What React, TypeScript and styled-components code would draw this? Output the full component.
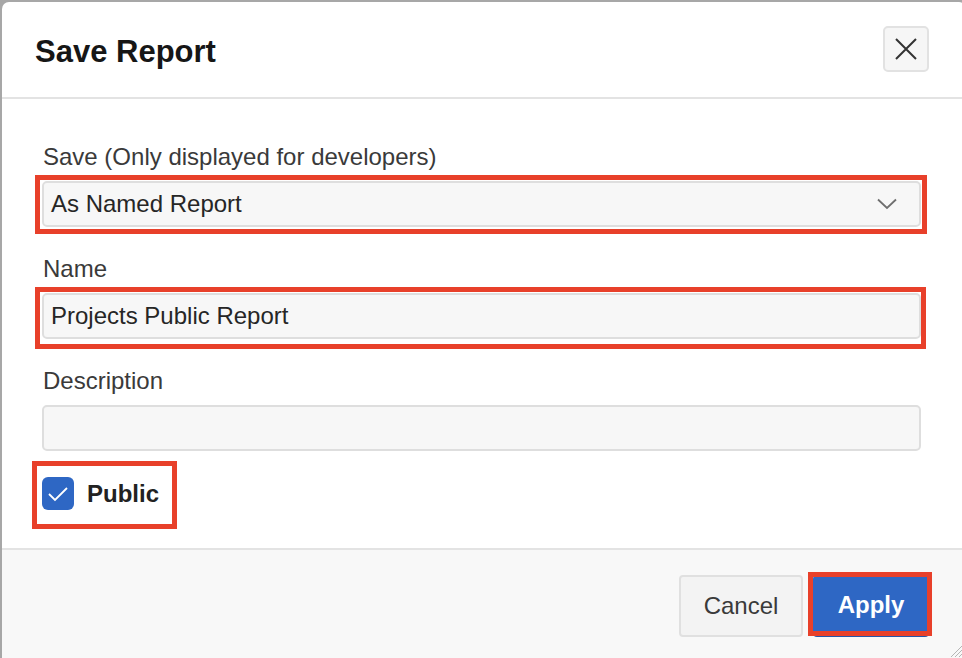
import React from 'react';
import styled, { createGlobalStyle } from 'styled-components';

const GlobalStyles = createGlobalStyle`
  html, body {
    margin: 0;
    padding: 0;
    height: 100%;
    background: #a7a7a7;
    overflow: hidden;
  }
  #root {
    height: 100%;
  }
  * {
    box-sizing: border-box;
  }
`;

const Dialog = styled.div`
  margin: 2px 0 0 2px;
  width: 964px;
  height: calc(100vh - 2px);
  background: #ffffff;
  border-top-left-radius: 7px;
  border-top-right-radius: 7px;
  display: flex;
  flex-direction: column;
  overflow: hidden;
  font-family: 'Liberation Sans', Arial, sans-serif;
  color: #262626;
  position: relative;
`;

const Header = styled.div`
  height: 97px;
  flex-shrink: 0;
  display: flex;
  align-items: center;
  justify-content: space-between;
  padding: 0 37px 0 33px;
  border-bottom: 2px solid #e3e3e3;
`;

const Title = styled.h1`
  margin: 0;
  font-size: 31px;
  font-weight: 700;
  color: #161616;
  padding-top: 5px;
`;

const CloseButton = styled.button`
  width: 46px;
  height: 46px;
  margin-top: -1px;
  border: 2px solid #e2e2e2;
  border-radius: 5px;
  background: #f6f6f6;
  display: flex;
  align-items: center;
  justify-content: center;
  padding: 0;
  color: #333333;
`;

const Body = styled.div`
  padding: 42px 45px 38px 38px;
  display: flex;
  flex-direction: column;
  gap: 26px;
`;

const Field = styled.div`
  display: flex;
  flex-direction: column;
  gap: 8px;
`;

const Label = styled.label`
  font-size: 24px;
  line-height: 32px;
  color: #3a3a3a;
  padding-left: 3px;
`;

const Control = styled.div`
  position: relative;
  margin-left: 2px;
`;

const Input = styled.div`
  height: 46px;
  border: 2px solid #dedede;
  border-radius: 5px;
  background: #f7f7f7;
  display: flex;
  align-items: center;
  justify-content: space-between;
  padding: 0 22px 0 7px;
  font-size: 24px;
  color: #262626;
`;

const Highlight = styled.div<{ $t: number; $r: number; $b: number; $l: number }>`
  position: absolute;
  top: ${(p) => -p.$t}px;
  right: ${(p) => -p.$r}px;
  bottom: ${(p) => -p.$b}px;
  left: ${(p) => -p.$l}px;
  border: 5px solid #e8402a;
  pointer-events: none;
`;

const CheckRow = styled.div`
  position: relative;
  display: flex;
  align-items: center;
  gap: 13px;
  margin-left: 2px;
  height: 33px;
  width: max-content;
`;

const CheckBox = styled.div`
  width: 32px;
  height: 33px;
  border-radius: 6px;
  background: #2e67c4;
  display: flex;
  align-items: center;
  justify-content: center;
`;

const CheckLabel = styled.span`
  font-size: 24px;
  font-weight: 700;
  color: #222222;
  padding-right: 18px;
`;

const Footer = styled.div`
  flex: 1;
  background: #f8f8f8;
  border-top: 2px solid #e3e3e3;
  display: flex;
  justify-content: flex-end;
  align-items: flex-start;
  gap: 10px;
  padding: 25px 37px 0 0;
`;

const Button = styled.button<{ $primary?: boolean }>`
  position: relative;
  height: 62px;
  padding: 0 22px;
  border-radius: 4px;
  font-family: 'Liberation Sans', Arial, sans-serif;
  font-size: 24px;
  font-weight: ${(p) => (p.$primary ? 700 : 400)};
  color: ${(p) => (p.$primary ? '#ffffff' : '#3a3a3a')};
  background: ${(p) => (p.$primary ? '#2e67c4' : '#f3f3f3')};
  border: 2px solid ${(p) => (p.$primary ? '#2e67c4' : '#e0e0e0')};
  border-bottom-color: ${(p) => (p.$primary ? '#2456a8' : '#e0e0e0')};
  border-bottom-width: ${(p) => (p.$primary ? '4px' : '2px')};
  width: ${(p) => (p.$primary ? '116px' : '124px')};
`;

const ResizeGrip = styled.svg`
  position: absolute;
  right: 2px;
  bottom: 0;
`;

function Chevron() {
  return (
    <svg width="20" height="12" viewBox="0 0 20 12" fill="none">
      <path d="M1 1.5 L10 10 L19 1.5" stroke="#6f6f6f" strokeWidth="1.8" />
    </svg>
  );
}

export default function App() {
  return (
    <>
      <GlobalStyles />
      <Dialog>
        <Header>
          <Title>Save Report</Title>
          <CloseButton aria-label="Close">
            <svg width="24" height="24" viewBox="0 0 24 24" fill="none">
              <path d="M2 2 L22 22 M22 2 L2 22" stroke="#333" strokeWidth="2" />
            </svg>
          </CloseButton>
        </Header>
        <Body>
          <Field>
            <Label>Save (Only displayed for developers)</Label>
            <Control>
              <Input>
                <span>As Named Report</span>
                <Chevron />
              </Input>
              <Highlight $t={6} $r={6} $b={7} $l={7} />
            </Control>
          </Field>
          <Field>
            <Label>Name</Label>
            <Control>
              <Input>Projects Public Report</Input>
              <Highlight $t={6} $r={5} $b={10} $l={7} />
            </Control>
          </Field>
          <Field>
            <Label>Description</Label>
            <Control>
              <Input />
            </Control>
          </Field>
          <CheckRow>
            <CheckBox>
              <svg width="22" height="16" viewBox="0 0 22 16" fill="none">
                <path d="M2 8 L8 14 L20 2" stroke="#ffffff" strokeWidth="1.8" />
              </svg>
            </CheckBox>
            <CheckLabel>Public</CheckLabel>
            <Highlight $t={16} $r={0} $b={19} $l={10} />
          </CheckRow>
        </Body>
        <Footer>
          <Button>Cancel</Button>
          <Button $primary>
            Apply
            <Highlight $t={5} $r={5} $b={3} $l={7} />
          </Button>
        </Footer>
        <ResizeGrip width="18" height="18" viewBox="0 0 18 18">
          <path d="M17 5 L5 17 M17 9 L9 17 M17 13 L13 17" stroke="#b5b5b5" strokeWidth="1" />
        </ResizeGrip>
      </Dialog>
    </>
  );
}
